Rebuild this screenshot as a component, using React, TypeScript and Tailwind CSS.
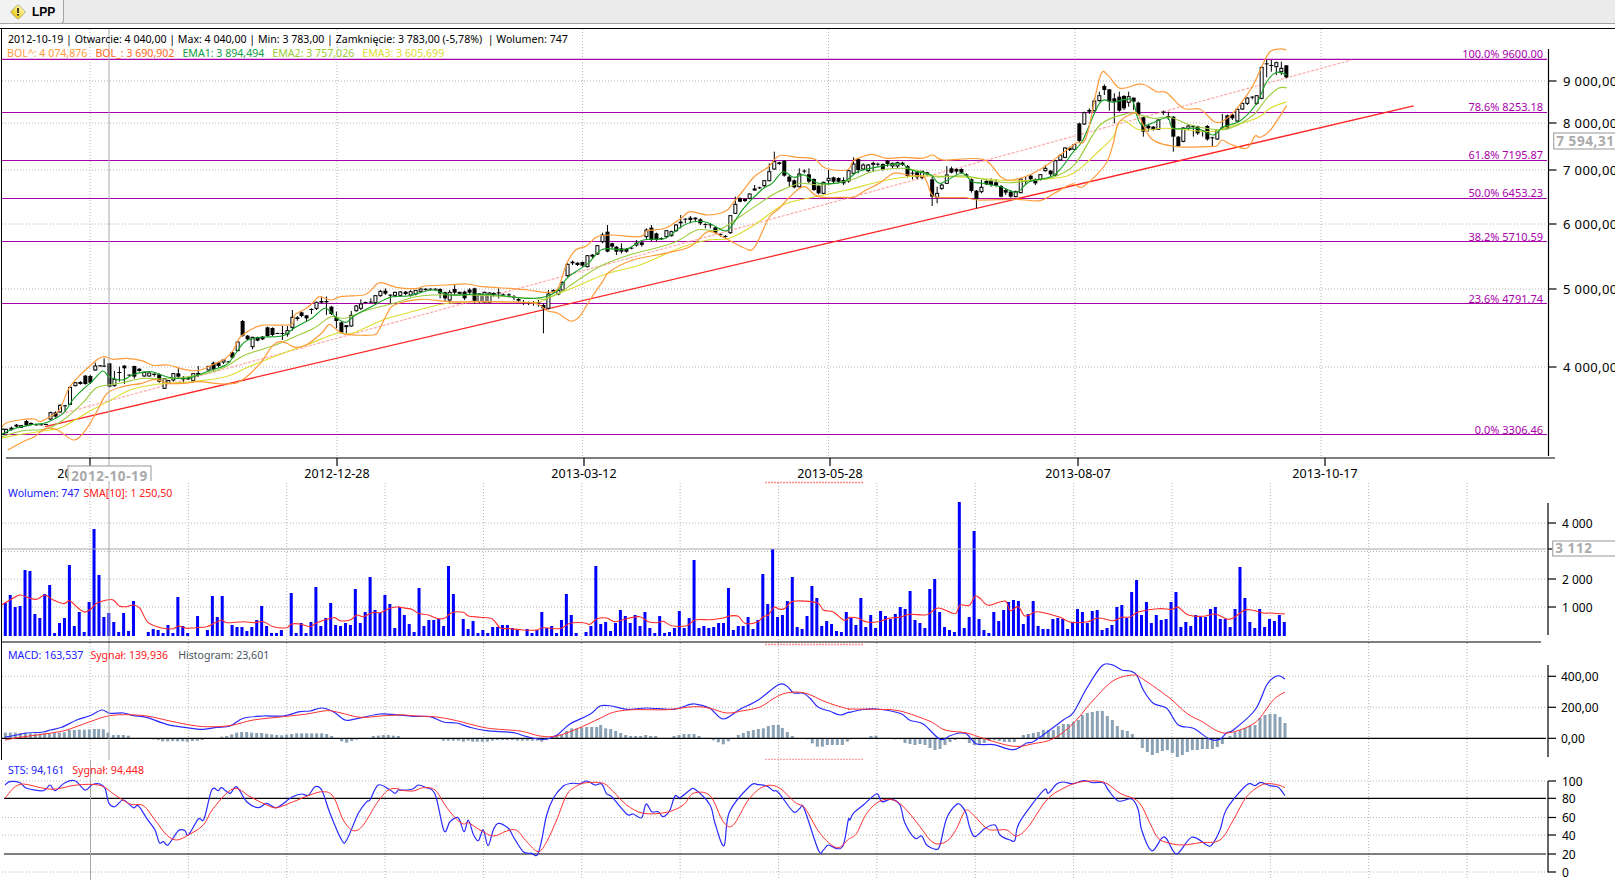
import React from "react";

type P = [number, number];
const parse = (s: string, ox: number, sx: number, oy: number): P[] =>
  s.trim().split(/\s+/).map((t) => {
    const [x, y] = t.split(",").map(Number);
    return [ox + x / sx, oy + y / 3] as P;
  });
const z7 = (s: string) => parse(s, 0, 2.613, 240);
const z8 = (s: string) => parse(s, 540, 2.8, 140);
const z6 = (s: string) => parse(s, 1050, 3, 40);
const merge = (a: string, b: string, c: string): P[] => [
  ...z7(a).filter((p) => p[0] <= 545),
  ...z8(b).filter((p) => p[0] > 545 && p[0] < 1100),
  ...z6(c).filter((p) => p[0] >= 1100),
];
const smooth = (p: P[]) => {
  let d = `M${p[0][0].toFixed(1)} ${p[0][1].toFixed(1)}`;
  for (let i = 0; i < p.length - 1; i++) {
    const a = p[Math.max(i - 1, 0)], b = p[i], c = p[i + 1], e = p[Math.min(i + 2, p.length - 1)];
    d += `C${(b[0] + (c[0] - a[0]) / 6).toFixed(1)} ${(b[1] + (c[1] - a[1]) / 6).toFixed(1)} ${(c[0] - (e[0] - b[0]) / 6).toFixed(1)} ${(c[1] - (e[1] - b[1]) / 6).toFixed(1)} ${c[0].toFixed(1)} ${c[1].toFixed(1)}`;
  }
  return d;
};

const upper = merge(
  "0,570 15,550 50,540 90,537 105,545 130,530 155,510 180,445 205,410 235,378 255,358 272,350 295,358 330,355 370,362 400,376 440,375 470,385 500,392 525,390 560,372 590,355 610,330 625,295 650,272 680,257 700,255 750,255 765,250 770,225 800,205 820,185 835,170 865,180 890,170 950,165 970,150 993,128 1040,143 1090,145 1110,138 1170,135 1220,132 1260,140 1330,145 1380,150 1425,157",
  "20,457 50,445 75,370 100,330 130,318 160,290 200,285 280,290 300,272 350,265 395,235 420,215 470,225 520,213 540,190 570,150 600,110 640,80 670,47 720,52 770,58 800,85 860,90 875,65 890,55 930,43 970,55 1020,52 1070,55 1100,45 1130,60 1240,58 1290,110 1320,120 1370,105 1420,75 1450,50 1500,10 1530,-10",
  "150,110 175,107 210,145 275,132 320,155 350,158 400,205 450,208 490,243 515,245 550,218 580,180 610,135 635,80 660,35 690,27 710,30"
);
const lower = merge(
  "20,630 60,605 90,590 120,565 150,570 195,600 230,560 255,510 280,460 320,440 370,430 405,418 440,430 480,430 520,425 590,432 630,422 680,370 710,320 730,305 750,310 770,322 800,315 840,280 860,253 880,270 905,283 975,285 990,270 1010,225 1030,195 1100,178 1170,185 1250,185 1330,186 1400,190",
  "20,512 50,520 85,543 110,530 140,480 175,425 195,395 260,360 350,340 420,320 470,275 510,290 570,323 600,323 640,235 670,205 700,170 740,140 780,170 860,172 880,172 910,152 950,130 990,100 1030,105 1075,112 1095,160 1115,172 1190,173 1225,180 1330,178 1400,182 1440,160 1490,132 1520,140 1568,90",
  "165,375 190,310 205,250 245,222 265,225 305,297 380,320 470,320 500,318 515,300 540,312 590,325 615,288 630,292 660,272 710,197"
);
const ema1 = merge(
  "0,585 40,565 90,553 120,548 165,520 190,480 215,450 240,425 268,393 285,410 320,420 350,403 395,395 440,412 490,415 540,395 590,375 610,350 640,305 680,292 720,290 745,285 770,263 815,235 850,205 880,235 905,247 925,228 970,200 1020,172 1070,167 1130,150 1175,165 1240,162 1300,165 1370,175 1425,183",
  "15,470 50,450 75,415 100,395 135,370 175,328 240,328 290,300 350,295 395,260 430,245 470,248 515,272 535,260 570,205 620,150 650,130 680,95 710,112 740,105 780,130 850,125 890,95 950,80 1010,72 1040,90 1095,105 1120,130 1180,100 1210,125 1240,130 1290,140 1335,157 1370,125 1440,105 1490,40 1520,0",
  "150,188 190,187 245,180 275,255 350,233 370,265 440,265 490,285 520,260 570,243 620,190 650,125 680,97 710,105"
);
const ema2 = merge(
  "0,592 60,572 120,567 165,540 215,490 250,445 285,435 320,428 375,415 430,417 490,410 540,400 590,380 640,345 720,315 770,290 820,265 865,230 900,235 960,210 1030,190 1080,172 1130,165 1230,165 1330,170 1420,178",
  "15,478 60,455 100,425 170,378 250,345 370,310 440,270 500,270 560,230 650,165 690,145 730,130 790,135 870,120 930,95 1010,85 1060,92 1110,110 1190,108 1250,120 1310,128 1370,122 1440,110 1500,70 1568,0",
  "150,255 235,220 270,225 310,235 360,232 420,255 490,268 540,265 610,225 650,175 685,145 710,143"
);
const ema3 = merge(
  "0,595 60,582 130,570 165,560 240,510 290,480 340,450 410,433 500,425 590,410 650,380 740,340 800,315 880,280 920,280 1000,240 1060,220 1110,205 1170,190 1270,185 1400,187",
  "15,477 100,440 190,400 280,375 400,320 470,300 530,295 600,255 680,195 750,175 860,150 950,125 1030,110 1110,108 1210,113 1320,122 1440,115 1500,95 1568,35",
  "150,330 190,290 215,240 270,270 350,265 480,275 530,262 620,235 660,205 710,185"
);

type C = [number, number, number, number, number, number];
const c7: C[] = [[8,565,568,582,585,0],[16,566,568,578,580,0],[30,560,563,570,572,1],[43,552,554,560,562,1],[55,555,557,562,564,0],[69,540,543,556,558,1],[81,547,549,554,556,1],[95,552,553,556,557,1],[108,553,553,555,556,1],[120,551,552,553,554,1],[132,515,518,537,540,0],[145,514,517,530,533,1],[157,493,496,516,518,0],[170,495,496,497,515,1],[183,440,442,493,495,0],[197,427,428,437,439,0],[210,423,426,432,434,1],[223,405,407,432,434,1],[236,405,408,428,432,1],[249,368,378,390,392,0],[262,375,376,379,380,1],[272,355,377,379,380,1],[286,369,370,440,442,1],[299,393,418,437,440,0],[312,380,396,398,425,1],[325,375,377,385,432,1],[338,403,404,405,406,1],[351,377,378,410,416,1],[364,385,386,393,395,1],[377,395,397,408,410,0],[390,398,399,408,410,0],[403,400,401,405,410,1],[416,400,403,425,428,1],[430,415,416,445,447,0],[440,420,422,430,432,0],[453,400,401,420,425,0],[466,383,400,410,415,1],[479,408,412,418,430,1],[492,410,413,418,420,1],[505,400,401,422,428,0],[518,378,399,405,410,1],[545,378,379,390,392,0],[558,365,368,388,392,1],[571,365,367,378,382,1],[584,358,360,366,372,0],[597,364,364,366,366,1],[607,335,337,353,356,1],[621,305,306,332,334,0],[634,240,243,287,290,1],[647,285,287,298,300,1],[660,290,292,320,328,0],[673,290,292,302,304,1],[686,288,290,298,300,1],[699,260,262,288,290,1],[712,262,264,285,288,1],[725,278,279,281,282,1],[738,258,279,281,300,1],[751,258,272,282,290,0],[764,210,232,262,272,0],[777,228,232,237,242,1],[788,215,217,228,232,1],[801,225,226,235,245,1],[814,205,207,209,222,1],[827,185,187,205,210,0],[840,170,183,188,190,1],[853,170,183,187,225,1],[866,198,200,222,225,1],[879,215,232,243,265,1],[892,245,247,278,280,1],[905,255,257,258,280,0],[918,213,226,258,260,0],[931,195,198,212,215,0],[943,178,192,205,210,0],[955,185,186,187,190,1],[969,175,185,187,190,1],[981,165,167,188,192,0],[994,150,154,167,170,0],[1007,145,152,161,165,1],[1020,163,164,166,190,1],[1032,155,157,166,172,0],[1046,153,156,166,170,0],[1060,153,155,162,166,1],[1073,150,155,165,170,0],[1086,150,151,162,166,0],[1099,145,147,154,158,0],[1112,145,146,150,152,1],[1125,145,146,147,148,1],[1138,145,146,147,148,1],[1150,145,147,160,175,1],[1163,155,157,175,185,1],[1175,150,157,180,190,0],[1188,132,147,158,165,1],[1201,155,157,159,162,0],[1214,152,155,175,180,1],[1227,145,149,158,165,1],[1240,143,145,182,192,1],[1253,160,162,185,190,0],[1266,155,157,187,190,0],[1279,157,159,187,190,0],[1290,157,159,165,170,1],[1303,145,157,160,175,1],[1315,160,163,165,170,1],[1330,160,163,165,172,1],[1343,165,170,171,180,1],[1355,172,177,182,188,1],[1368,180,186,188,195,1],[1381,185,187,188,195,1],[1394,183,186,188,197,1],[1407,180,186,189,200,1],[1420,190,195,205,280,1],[1433,150,162,205,208,0],[1446,148,150,155,160,1],[1459,150,151,162,166,0],[1470,125,127,150,152,0],[1483,70,73,107,110,0],[1496,62,65,70,75,1],[1509,67,68,75,78,1],[1522,65,66,77,80,1],[1535,45,47,80,82,0],[1548,42,44,50,54,1],[1561,15,17,42,45,0]];
const c8: C[] = [[175,278,285,305,310,0],[189,255,275,335,337,1],[202,308,310,320,325,1],[214,318,320,335,345,1],[228,310,325,335,340,1],[242,325,326,335,338,1],[256,322,323,325,328,1],[270,300,310,315,320,0],[285,305,307,315,320,1],[298,265,270,290,300,0],[312,255,263,300,305,1],[326,278,280,300,305,1],[340,292,294,298,300,1],[354,270,272,290,295,0],[368,272,275,287,290,0],[381,252,255,272,275,0],[394,225,245,250,265,1],[407,235,236,238,250,1],[421,228,233,240,250,1],[435,232,233,238,245,1],[449,235,238,250,255,1],[463,250,252,254,265,1],[477,250,253,255,265,1],[491,260,262,278,282,1],[505,280,282,285,290,1],[519,285,288,290,298,1],[533,225,227,278,282,0],[547,170,193,220,222,0],[560,172,175,185,187,1],[574,175,177,183,186,1],[587,160,162,175,178,0],[601,135,147,150,152,0],[615,140,142,145,147,1],[628,120,122,137,142,0],[642,70,95,122,124,0],[656,35,65,87,90,0],[670,65,67,72,75,1],[684,60,62,107,110,1],[698,105,110,125,140,1],[712,118,121,142,145,1],[726,85,102,140,142,0],[740,88,92,95,100,1],[753,85,103,125,130,1],[767,115,117,150,153,1],[780,135,137,160,163,1],[794,125,127,160,163,0],[808,90,115,122,135,0],[822,110,112,125,130,1],[836,112,114,125,130,1],[850,112,120,130,135,1],[864,90,92,123,128,0],[878,52,72,100,105,0],[891,55,57,90,100,1],[905,70,75,87,90,0],[919,72,75,92,97,0],[933,65,70,72,95,0],[946,68,71,73,80,1],[960,70,72,88,92,1],[973,60,62,72,80,1],[987,68,70,78,85,0],[1001,65,68,78,85,0],[1015,65,68,75,78,1],[1029,75,78,108,112,1],[1043,90,98,100,118,1],[1056,95,97,112,118,1],[1070,92,94,112,118,0],[1084,95,97,103,108,1],[1098,105,118,170,198,1],[1112,140,160,172,190,0],[1125,130,135,145,150,0],[1139,78,105,130,132,0],[1152,80,85,98,100,1],[1166,85,87,95,102,1],[1180,85,87,98,100,1],[1194,100,103,107,110,1],[1208,115,118,153,158,1],[1222,150,152,178,205,1],[1236,120,142,155,160,0],[1250,118,123,133,135,1],[1263,115,122,135,140,1],[1277,118,127,137,140,1],[1291,135,138,170,172,1],[1304,145,150,158,165,1],[1318,150,155,170,173,1],[1332,152,155,170,172,0],[1346,115,117,158,160,0],[1360,110,120,125,135,1],[1374,105,107,118,125,1],[1387,115,118,130,135,1],[1401,102,104,118,122,0],[1415,75,85,92,95,0]];
const c6: C[] = [[2,390,392,403,408,1],[16,360,362,405,408,0],[31,343,346,360,362,0],[45,322,324,352,355,0],[59,320,323,330,333,1],[73,312,314,328,330,0],[88,248,250,303,306,1],[103,215,218,252,255,0],[118,205,210,215,222,1],[133,175,183,212,215,0],[148,155,167,182,185,0],[163,133,138,150,165,1],[178,148,148,185,212,1],[193,160,175,185,250,1],[208,155,170,212,215,1],[222,165,168,205,210,1],[236,155,170,187,200,0],[251,172,173,185,210,1],[265,185,188,225,228,1],[280,230,232,275,290,1],[295,255,257,265,275,1],[310,258,260,270,272,1],[325,238,240,268,270,0],[340,212,215,218,225,1],[355,215,228,232,240,1],[370,228,230,290,335,1],[385,288,290,318,320,1],[400,262,264,304,307,0],[415,255,258,265,270,0],[430,255,258,260,290,1],[443,257,259,280,285,1],[458,270,272,275,290,1],[472,255,258,298,302,1],[487,290,292,293,318,1],[502,270,272,297,300,0],[517,222,262,270,270,1],[532,224,226,265,268,1],[547,222,224,235,240,1],[562,205,208,243,247,0],[577,188,190,207,210,0],[592,172,174,190,195,0],[607,168,170,172,178,1],[620,165,167,190,195,0],[635,80,82,175,178,0],[650,60,70,72,112,1],[664,60,75,78,95,1],[679,65,68,80,105,0],[694,65,85,95,105,0],[709,75,76,112,115,1]];
const candles: C[] = [
  ...c7.map((c) => [c[0] / 2.613, 240 + c[1] / 3, 240 + c[2] / 3, 240 + c[3] / 3, 240 + c[4] / 3, c[5]] as C),
  ...c8.map((c) => [540 + c[0] / 2.8, 140 + c[1] / 3, 140 + c[2] / 3, 140 + c[3] / 3, 140 + c[4] / 3, c[5]] as C),
  ...c6.map((c) => [1050 + c[0] / 3, 40 + c[1] / 3, 40 + c[2] / 3, 40 + c[3] / 3, 40 + c[4] / 3, c[5]] as C),
];

const volA = [33,41,29,30,66,65,22,18,42,51,3,13,18,71,10,24,4,34,107,61,19,23,14,4,23,5,35,0,0,4,7,6,3,11,3,39,10,3,0,20,0,6,40,19,40,0,11,9,9,5,9,16,30,10,3,3,6,0,43,3,13,3,14,49,10,18,33,11,10,13,11,47,13,24,59,26,23,41,32,8,29];
const volB = [21,12,4,48,10,16,16,17,10,70,42,0,17,7,15,3,6,3,9,9,11,11,8,7,0,7,3,6,24,8,10,3,16,42,21,3,0,4,10,70,12,14,5,13,26,20,13,21,10,24,8,3,20,3,4,8,25,8,18,76,8,10,8,9,13,13,48,6,10,10,19,7,16,62,32,87,19,21,35,59,9,7,20,50,38,10,15,12,5,4,24];
const volC = [18,11,38,9,21,8,25,20,17,22,29,27,45,16,13,8,47,57,24,9,6,4,134,8,19,105,17,6,3,24,15,26,34,36,35,12,22,35,10,7,7,17,18,17,7,14,27,24,13,25,26,6,8,11,29,31,18,44,56,21,34,13,21,16,17,34,44,9,14,10,21,19,19,27,29,17,17,9,27,69,38,14,8,27,9,17,15,21,14];
const spread = (v: number[], a: number, b: number) => v.map((h, i) => [a + ((b - a) * i) / (v.length - 1), h] as P);
const volumes = [...spread(volA, 5.3, 399.7), ...spread(volB, 404.3, 846.3), ...spread(volC, 851, 1284.3)];

const sma = [
  ...parse("0,497 30,480 60,465 85,473 110,478 135,465 160,480 190,491 210,483 235,505 255,516 275,505 290,490 320,480 340,480 358,498 380,500 400,495 420,505 445,548 490,565 520,566 535,558 560,565 585,563 620,560 645,548 665,540 680,548 730,545 760,548 790,545 820,560 860,563 875,552 900,552 930,560 950,548 1000,533 1020,542 1050,540 1070,525 1090,530 1120,517 1140,518 1170,505 1195,500", 0, 3, 440),
  ...parse("0,352 35,358 55,370 85,375 115,386 135,384 155,368 190,367 205,378 240,382 277,387 300,413 330,416 370,420 410,420 430,413 480,416 510,400 550,398 570,403 590,387 620,384 645,395 685,385 720,380 745,395 770,398 790,394 815,407 860,407 885,390 930,389 970,384 990,378 1015,379 1035,400 1070,397 1090,380 1105,375 1122,352 1140,358 1155,355 1180,334 1250,338 1270,360 1300,366 1330,390 1345,385", 400, 3, 490),
  ...parse("0,382 25,385 50,396 85,395 120,384 150,382 180,373 230,374 265,354 315,371 330,345 358,346 375,319 390,325 415,346 465,333 480,362 505,350 525,378 555,366 575,367 630,382 660,396 710,396 745,384 790,392 815,382 840,381 865,366 925,356 965,358 985,352 1015,375 1060,379 1095,372 1130,387 1150,384 1180,362 1200,359 1240,369 1260,369 1305,372", 850, 3, 490),
];

const macdBlue = [
  ...parse("15,291 50,285 80,279 130,276 150,270 185,262 230,240 270,227 305,210 330,220 370,219 400,227 440,232 500,253 560,263 610,268 650,262 690,258 730,235 790,228 850,228 900,215 930,213 965,204 1000,215 1035,240 1060,238 1090,232 1140,222 1195,225", 0, 3, 640),
  ...parse("0,195 40,199 90,200 130,216 170,219 210,232 260,242 340,248 380,260 430,268 470,256 510,222 570,193 600,168 635,168 680,178 740,174 820,178 870,163 890,163 930,175 970,207 1020,178 1075,150 1135,104 1160,108 1180,128 1210,130 1230,145 1255,172 1290,184 1320,195 1345,187", 400, 3, 650),
  ...parse("0,187 30,180 80,177 150,190 180,211 220,222 270,268 300,257 330,249 350,252 380,282 430,284 490,299 530,279 555,272 640,210 670,188 710,115 755,48 785,44 815,60 840,63 860,75 880,120 910,160 950,175 985,225 1030,235 1080,268 1110,268 1130,248 1150,240 1215,180 1250,105 1275,80 1290,78 1305,87", 850, 3, 650),
];
const macdRed = [
  ...parse("15,300 60,292 110,285 160,278 200,270 270,245 320,229 370,224 440,228 510,243 590,258 650,260 700,255 760,240 850,230 920,222 980,212 1020,218 1080,232 1140,228 1195,225", 0, 3, 640),
  ...parse("0,194 50,198 110,201 170,212 260,234 360,243 420,258 470,258 530,237 600,205 640,187 700,179 800,179 880,170 930,175 980,189 1030,182 1080,171 1130,140 1165,128 1215,129 1280,157 1345,177", 400, 3, 650),
  ...parse("0,177 80,178 150,183 240,214 285,240 350,249 400,265 490,289 550,281 610,266 670,220 730,150 790,92 850,75 880,88 960,145 1010,190 1060,217 1100,242 1140,248 1215,218 1270,150 1305,126", 850, 3, 650),
];
const stsBlue = [
  ...parse("15,435 30,425 60,428 80,445 130,452 150,435 165,452 195,428 225,422 255,450 275,435 300,432 315,445 327,490 345,500 370,480 400,503 415,497 440,535 465,570 478,608 490,605 505,614 535,572 555,572 565,585 595,537 612,537 635,450 655,452 665,443 690,460 710,440 740,485 775,503 800,490 830,503 875,472 905,462 925,466 945,440 965,450 990,520 1025,600 1040,600 1075,520 1100,485 1110,480 1135,435 1170,450 1185,460 1195,450", 0, 3, 640),
  ...parse("0,420 20,420 40,416 55,405 75,412 105,432 132,542 150,515 175,503 192,545 205,510 220,553 235,572 250,540 264,587 280,540 295,520 325,535 340,560 370,605 395,610 412,615 425,570 440,495 460,445 490,408 515,400 540,401 560,393 585,405 605,402 620,432 635,440 680,492 700,492 725,503 738,462 755,485 775,485 785,498 795,498 810,480 825,438 840,443 870,420 885,418 930,465 945,520 972,587 988,487 1050,408 1075,404 1100,408 1120,422 1135,427 1180,485 1200,475 1212,475 1255,600 1270,600 1285,585 1310,596 1330,585 1345,510", 400, 3, 650),
  ...parse("0,510 10,490 40,465 80,432 95,455 125,448 150,465 165,520 195,565 215,558 230,585 258,598 270,585 290,505 320,463 335,468 348,490 360,535 375,560 405,535 435,525 450,555 480,570 495,570 508,518 580,422 595,430 620,402 640,396 670,401 700,392 730,398 760,398 775,420 805,453 845,447 865,480 875,540 905,602 935,565 950,567 980,612 1025,562 1070,585 1085,585 1110,540 1130,477 1190,405 1215,407 1232,397 1260,407 1285,412 1305,437", 850, 3, 650),
];
const stsRed = [
  ...parse("15,475 40,445 70,432 130,445 170,447 230,435 300,436 345,465 390,492 430,497 465,540 500,585 530,600 565,585 610,555 640,505 700,446 750,470 800,495 830,503 880,485 930,465 970,455 1000,470 1030,540 1060,572 1090,555 1130,490 1165,450 1195,446", 0, 3, 640),
  ...parse("0,420 40,423 70,413 105,420 135,465 165,503 190,522 205,518 240,540 280,558 320,543 350,541 380,575 415,605 440,575 470,510 500,435 530,408 560,398 610,400 640,425 680,465 730,490 800,487 850,465 880,430 930,437 970,515 1000,525 1045,450 1090,410 1135,412 1185,457 1215,475 1260,550 1310,593 1345,568", 400, 3, 650),
  ...parse("0,565 20,550 50,490 90,453 130,450 165,475 210,530 240,570 265,582 295,570 320,535 345,483 365,490 410,535 440,540 470,540 500,558 535,530 590,450 640,415 690,396 760,396 810,430 865,455 900,520 925,565 960,580 1000,585 1050,578 1110,570 1150,510 1190,440 1240,403 1285,405 1305,413", 850, 3, 650),
];
const hist = [
  ...parse("16,278 31,278 46,278 61,279 76,278 91,280 106,281 120,281 134,281 148,280 163,279 178,278 193,277 208,270 223,270 238,269 253,269 268,268 283,267 296,267 310,268 324,278 340,285 355,285 370,285 385,287 460,298 475,300 488,304 503,304 518,303 533,304 548,304 562,305 577,303 592,302 607,300 665,290 680,288 695,283 710,278 725,276 740,276 755,278 770,279 785,279 800,281 815,283 830,285 845,286 860,284 875,282 890,280 905,280 920,280 935,280 950,280 965,280 980,282 995,288 1025,304 1040,308 1055,303 1070,299 1120,288 1135,287 1150,285 1165,285 1180,287 1195,288", 0, 3, 640),
  ...parse("115,267 130,272 145,272 160,272 175,272 190,275 205,272 218,275 232,275 247,275 262,275 277,272 292,270 307,270 322,270 337,270 352,272 367,272 382,272 397,272 412,272 425,275 440,270 455,267 470,258 485,253 500,243 515,235 530,235 545,232 560,231 575,231 590,231 602,225 617,235 632,237 647,243 662,249 677,255 692,258 707,258 722,258 737,255 752,258 767,258 822,258 837,255 852,252 867,252 882,252 897,258 940,271 955,277 970,283 985,274 1015,255 1030,249 1045,243 1060,240 1075,237 1090,235 1105,228 1120,225 1135,225 1147,234 1162,246 1177,258 1222,268 1237,280 1252,290 1267,290 1282,285 1297,285 1312,285 1327,285 1342,275", 400, 3, 650),
  ...parse("0,268 63,258 78,257 135,268 150,268 165,279 180,282 195,285 210,282 225,285 240,294 255,300 270,297 285,285 300,276 315,270 345,268 358,279 373,285 388,282 403,279 418,273 433,270 448,273 463,276 478,276 493,276 520,255 535,252 550,249 565,246 580,240 595,240 610,240 625,228 640,222 655,222 670,216 685,210 697,195 712,189 727,186 742,183 757,183 772,198 787,210 802,228 817,240 832,243 847,252 862,268 877,294 892,306 907,315 922,309 937,303 952,300 967,309 982,321 997,315 1012,306 1027,300 1042,300 1057,297 1072,297 1087,297 1102,291 1117,282 1140,258 1155,246 1170,240 1185,234 1200,228 1215,225 1230,204 1245,195 1260,192 1275,192 1290,201 1305,219", 850, 3, 650),
];

const X0 = 2, XEND = 1547;
const gridFine = Array.from({ length: 15 }, (_, i) => 90 + i * 98.36);
const DOT = "#b4b4b4";
const Dotted = ({ ys, xs, y1, y2 }: { ys: number[]; xs: number[]; y1: number; y2: number }) => (
  <g stroke={DOT} strokeWidth={1} strokeDasharray="1 2">
    {ys.map((y) => <line key={y} x1={X0} x2={XEND} y1={y} y2={y} />)}
    {xs.map((x) => <line key={x} x1={x} x2={x} y1={y1} y2={y2} />)}
  </g>
);
const Axis = ({ y1, y2, x = 1548.5, ticks, lx, size = 12, ls = 0 }: { y1: number; y2: number; x?: number; ticks: [number, string][]; lx: number; size?: number; ls?: number }) => (
  <g>
    <line x1={x} x2={x} y1={y1} y2={y2} stroke="#000" strokeWidth={1.2} />
    {ticks.map(([y, t]) => (
      <g key={y}>
        <line x1={x} x2={x + 8} y1={y} y2={y} stroke="#000" strokeWidth={1.2} />
        {t && <text x={lx} y={y + 4.5} fontSize={size} letterSpacing={ls} fill="#000">{t}</text>}
      </g>
    ))}
  </g>
);
const Line = ({ p, c, w = 1.1 }: { p: P[]; c: string; w?: number }) => (
  <path d={smooth(p)} fill="none" stroke={c} strokeWidth={w} strokeLinejoin="round" />
);
const Tag = ({ y, h, text, x }: { y: number; h: number; text: string; x: number }) => (
  <g>
    <rect x={x} y={y} width={90} height={h} fill="#fff" stroke="#a8a8a8" strokeWidth={1.2} />
    <text x={x + 2.5} y={y + h - 3.5} fontSize={13.5} letterSpacing={0.6} fontWeight={700} fill="#aaaaaa">{text}</text>
  </g>
);
const PINK = "#ff8f8f";
const Pane = ({ y0, h, children }: { y0: number; h: number; children: React.ReactNode }) => (
  <div className="relative ml-px w-[1614px] border-l border-black" style={{ height: h }}>
    <svg className="block" width={1613} height={h} viewBox={`2 ${y0} 1613 ${h}`}>{children}</svg>
  </div>
);

const fibs: [number, string, number][] = [
  [59.3, "100.0% 9600.00", 57.5],
  [112.5, "78.6% 8253.18", 111],
  [160.5, "61.8% 7195.87", 159],
  [198.5, "50.0% 6453.23", 197],
  [241.5, "38.2% 5710.59", 240.5],
  [303.5, "23.6% 4791.74", 302.5],
  [434.5, "0.0% 3306.46", 433.5],
];

export default function App() {
  return (
    <div className="relative h-[880px] w-[1615px] overflow-hidden bg-white font-['Noto_Sans',sans-serif] text-[10.6px] leading-none">
      <div className="flex h-[24px] border-b border-[#a3a3a3] bg-[#ebebeb]">
        <div className="flex h-[24px] w-[64px] items-center gap-[6px] rounded-br-[4px] border-r border-b border-[#a3a3a3] bg-[#f2f2f2] pl-[10px]">
          <svg width="16" height="16" viewBox="0 0 16 16">
            <defs>
              <linearGradient id="warn" x1="0" y1="0" x2="0" y2="1">
                <stop offset="0" stopColor="#fff7a0" />
                <stop offset="1" stopColor="#ecc81e" />
              </linearGradient>
            </defs>
            <rect x="2.6" y="2.6" width="10.8" height="10.8" rx="1.6" transform="rotate(45 8 8)" fill="url(#warn)" stroke="#a8a07a" strokeWidth="0.8" />
            <rect x="7.2" y="4" width="1.7" height="5" fill="#222" />
            <rect x="7.2" y="10" width="1.7" height="1.7" fill="#222" />
          </svg>
          <span className="font-['Liberation_Sans',sans-serif] text-[12px] font-bold text-black">LPP</span>
        </div>
      </div>
      <div className="h-[4px]" />
      <div className="h-px bg-black" />

      <Pane y0={29} h={452}>
        <Dotted ys={[81, 123, 170, 224, 289, 367]} xs={[90, 337, 582.5, 828.5, 1075, 1321]} y1={29} y2={458} />
        {fibs.map(([y, t, by]) => (
          <g key={t}>
            <line x1={X0} x2={XEND} y1={y} y2={y} stroke="#a800a8" strokeWidth={1.2} />
            <text x={1543} y={by} textAnchor="end" fontSize={11} fill="#aa00aa">{t}</text>
          </g>
        ))}
        <line x1={45} y1={426.7} x2={1413.6} y2={105.8} stroke="#ff2424" strokeWidth={1.3} />
        <line x1={57} y1={415} x2={1351.6} y2={60} stroke="#ffa8a8" strokeWidth={1.2} strokeDasharray="3 1.5" />
        {candles.map((c, i) => (
          <g key={i}>
            <line x1={c[0]} x2={c[0]} y1={c[1]} y2={c[4]} stroke="#000" strokeWidth={1} />
            {c[5] ? (
              <rect x={c[0] - 2} y={c[2]} width={4} height={Math.max(c[3] - c[2], 1)} fill="#000" />
            ) : (
              <rect x={c[0] - 1.5} y={c[2]} width={3} height={Math.max(c[3] - c[2], 1)} fill="#fff" stroke="#000" strokeWidth={1} />
            )}
          </g>
        ))}
        <Line p={ema3} c="#dcdc2e" />
        <Line p={ema2} c="#9ccc3c" />
        <Line p={ema1} c="#12a022" />
        <Line p={upper} c="#ff9a3a" w={1.2} />
        <Line p={lower} c="#ff9a3a" w={1.2} />
        <line x1={109} x2={109} y1={29} y2={481} stroke="#a8a8a8" strokeWidth={1} />
        <line x1={6} x2={1555} y1={458} y2={458} stroke="#000" strokeWidth={1.2} />
        {[90, 337, 584, 830, 1078, 1325].map((x, i) => (
          <g key={x}>
            <line x1={x} x2={x} y1={458} y2={466} stroke="#000" strokeWidth={1.2} />
            <text x={x} y={478} textAnchor="middle" fontSize={12.5} fill="#000">
              {["2012-10-19", "2012-12-28", "2013-03-12", "2013-05-28", "2013-08-07", "2013-10-17"][i]}
            </text>
          </g>
        ))}
        <rect x={68} y={466} width={83} height={22} fill="#fff" stroke="#a8a8a8" strokeWidth={1.2} />
        <text x={109.5} y={480.5} textAnchor="middle" fontSize={13.5} letterSpacing={0.6} fontWeight={700} fill="#aaaaaa">2012-10-19</text>
        <Axis y1={49} y2={456} size={13} ls={0.4} ticks={[[81, "9 000,00"], [123, "8 000,00"], [170, "7 000,00"], [224, "6 000,00"], [289, "5 000,00"], [367, "4 000,00"]]} lx={1563} />
        <Tag x={1553.7} y={133} h={16} text="7 594,31" />
      </Pane>

      <Pane y0={481} h={162}>
        <Dotted ys={[523, 551.5, 579, 607]} xs={gridFine} y1={483} y2={643} />
        <line x1={765} x2={864} y1={482.5} y2={482.5} stroke={PINK} strokeWidth={1.3} strokeDasharray="2 1" />
        {volumes.map(([x, h], i) => h > 0 && <rect key={i} x={x - 1.5} y={636 - h} width={3} height={h} fill="#0000ff" />)}
        <path d={smooth(sma)} fill="none" stroke="#ff2a2a" strokeWidth={1.1} />
        <line x1={X0} x2={1546} y1={549} y2={549} stroke="#a8a8a8" strokeWidth={1} />
        <line x1={109} x2={109} y1={481} y2={643} stroke="#a8a8a8" strokeWidth={1} />
        <line x1={X0} x2={1541} y1={642} y2={642} stroke="#000" strokeWidth={1.2} />
        <Axis x={1548} y1={503} y2={635} ticks={[[523, "4 000"], [549, ""], [579, "2 000"], [607, "1 000"]]} lx={1562} />
        <Tag x={1552.7} y={541} h={15} text="3 112" />
      </Pane>

      <Pane y0={643} h={117}>
        <Dotted ys={[676.3, 707.3]} xs={gridFine} y1={643} y2={760} />
        <line x1={765} x2={864} y1={644.5} y2={644.5} stroke={PINK} strokeWidth={1.3} strokeDasharray="2 1" />
        <line x1={765} x2={864} y1={759.3} y2={759.3} stroke={PINK} strokeWidth={1} strokeDasharray="2 1" />
        {hist.map(([x, y], i) => (
          <rect key={i} x={x - 1.5} y={Math.min(y, 738.3)} width={3} height={Math.abs(y - 738.3)} fill="#8ba2b5" />
        ))}
        <line x1={X0} x2={1546} y1={738.3} y2={738.3} stroke="#000" strokeWidth={1.2} />
        <Line p={macdBlue} c="#2a2aff" w={1.2} />
        <Line p={macdRed} c="#ff3030" w={1} />
        <line x1={109} x2={109} y1={643} y2={760} stroke="#a8a8a8" strokeWidth={1} />
        <Axis x={1548} y1={665} y2={757} ticks={[[676.3, "400,00"], [707.3, "200,00"], [738.3, "0,00"]]} lx={1561} />
      </Pane>

      <div className="ml-[2px] h-[120px]">
        <svg className="block" width={1613} height={120} viewBox="2 760 1613 120">
          <Dotted ys={[781, 817.5, 835, 872]} xs={gridFine.slice(1)} y1={760} y2={880} />
          <line x1={4} x2={1546} y1={798.3} y2={798.3} stroke="#000" strokeWidth={1.2} />
          <line x1={4} x2={1546} y1={854} y2={854} stroke="#000" strokeWidth={1.2} />
          <line x1={90.5} x2={90.5} y1={760} y2={880} stroke="#a8a8a8" strokeWidth={1} />
          <Line p={stsBlue} c="#2a2aff" w={1.2} />
          <Line p={stsRed} c="#ff3030" w={1} />
          <Axis x={1548} y1={781} y2={872.6} ticks={[[781, "100"], [798.3, "80"], [817.5, "60"], [835, "40"], [854, "20"], [872, "0"]]} lx={1562} />
        </svg>
      </div>

      <div className="absolute left-[8px] top-[33px] flex h-[12px] items-center whitespace-pre text-black">2012-10-19 | Otwarcie: 4 040,00 | Max: 4 040,00 | Min: 3 783,00 | Zamknięcie: 3 783,00 (-5,78%)  | Wolumen: 747</div>
      <div className="absolute left-[7px] top-[47px] flex h-[12px] items-center gap-[8px] whitespace-pre">
        <span className="text-[#ff9a3a]">BOL^: 4 074,876</span>
        <span className="text-[#ff6a1a]">BOL_: 3 690,902</span>
        <span className="text-[#10a040]">EMA1: 3 894,494</span>
        <span className="text-[#99cc33]">EMA2: 3 757,026</span>
        <span className="text-[#dddd33]">EMA3: 3 605,699</span>
      </div>
      <div className="absolute left-[8px] top-[487px] flex h-[12px] items-center gap-[4px] whitespace-pre">
        <span className="text-[#2020ff]">Wolumen: 747</span>
        <span className="text-[#ff2020]">SMA[10]: 1 250,50</span>
      </div>
      <div className="absolute left-[8px] top-[649px] flex h-[12px] items-center gap-[7px] whitespace-pre">
        <span className="text-[#2020ff]">MACD: 163,537</span>
        <span className="text-[#ff2020]">Sygnał: 139,936</span>
        <span className="ml-[3px] text-[#4a5560]">Histogram: 23,601</span>
      </div>
      <div className="absolute left-[8px] top-[764px] flex h-[12px] items-center gap-[8px] whitespace-pre">
        <span className="text-[#2020ff]">STS: 94,161</span>
        <span className="text-[#ff2020]">Sygnał: 94,448</span>
      </div>
    </div>
  );
}
